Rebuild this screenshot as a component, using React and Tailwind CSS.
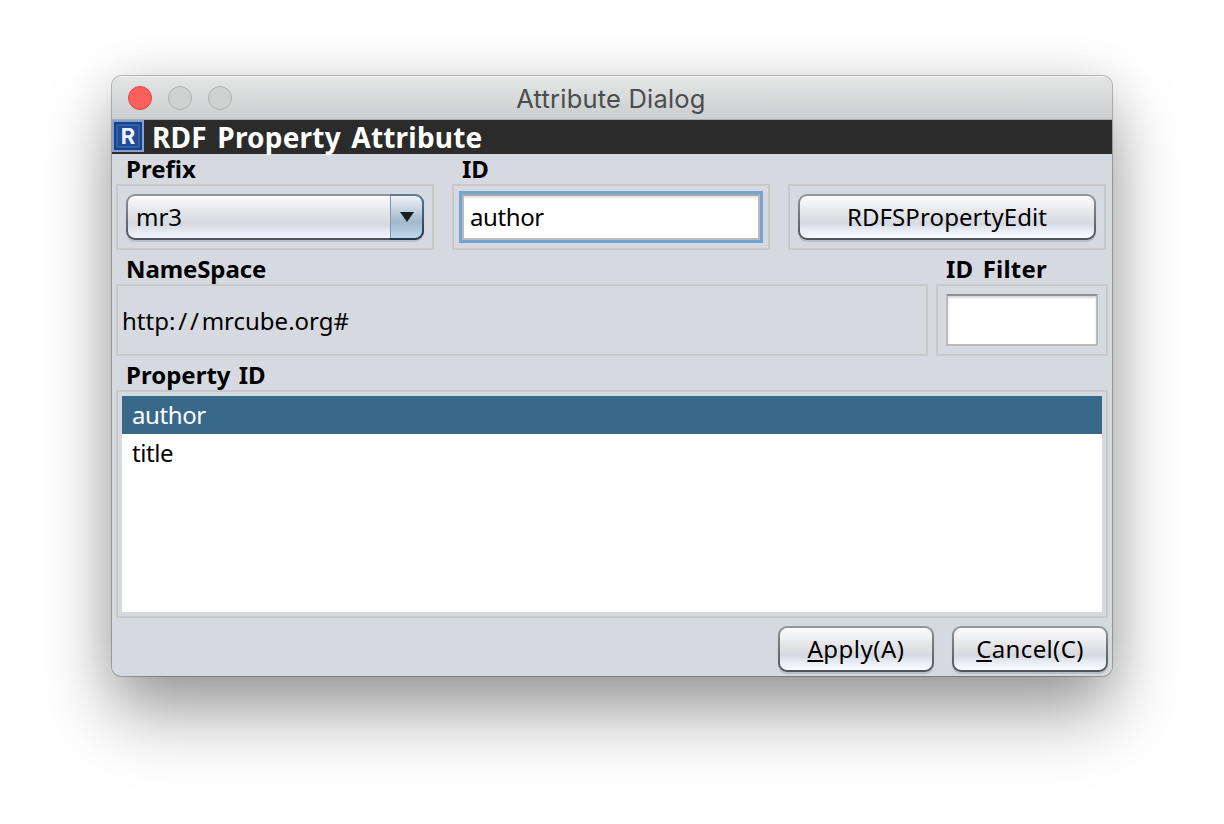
import React from "react";

const raised =
  "flex items-center justify-center rounded-[9px] p-[2px] bg-gradient-to-b from-[#94989d] to-[#50535a] shadow-[0_2px_1px_#b9bdc4]";
const face =
  "flex h-full w-full items-center justify-center rounded-[7px] bg-[linear-gradient(to_bottom,#fcfcfd_0%,#e6e7ea_38%,#d6d9df_66%,#e8ebf4_80%,#fafcff_100%)]";

function Label({ children, className }) {
  return <div className={`pl-[10px] text-[24px] font-bold whitespace-pre ${className}`}>{children}</div>;
}

function Button({ children, className }) {
  return (
    <button className={`${raised} ${className}`}>
      <span className={face}>
        <span>{children}</span>
      </span>
    </button>
  );
}

function PropertyIcon() {
  return (
    <div className="h-[32px] w-[32px] border-2 border-[#8ba0cb] bg-[#113f91] p-[2px]">
      <div className="flex h-full items-center justify-center border-2 border-[#355f9f] bg-[#1f4b98] font-['Inter',sans-serif] text-[22px] leading-[22px] font-bold text-[#f0f3fb]">
        R
      </div>
    </div>
  );
}

export default function App() {
  return (
    <div className="h-[824px] w-[1224px] overflow-hidden bg-white pt-[76px] pl-[112px] font-['Noto_Sans',sans-serif] text-[24px] text-black">
      <div className="h-[600px] w-[1000px] rounded-[10px] shadow-[0_0_0_1px_rgba(0,0,0,0.25),0_38px_70px_rgba(0,0,0,0.36),0_4px_50px_rgba(0,0,0,0.12)]">
        <div className="flex h-full flex-col overflow-hidden rounded-[10px] bg-[#d6d9e0]">
          <header className="relative flex h-[44px] shrink-0 items-center border-t border-b border-t-[#f3f4f4] border-b-[#a9abab] bg-gradient-to-b from-[#e4e6e6] to-[#cbcdce] pl-[16px]">
            <div className="flex gap-[16px]">
              <i className="h-[24px] w-[24px] rounded-full border border-[#e2463f] bg-[#fc605b]" />
              <i className="h-[24px] w-[24px] rounded-full border border-[#adafaf] bg-[#d0d2d2]" />
              <i className="h-[24px] w-[24px] rounded-full border border-[#adafaf] bg-[#d0d2d2]" />
            </div>
            <div className="absolute inset-x-0 top-0 pr-[2px] text-center font-['Inter',sans-serif] text-[25.5px] leading-[44px] tracking-[0.2px] text-[#4b4c4d]">
              Attribute Dialog
            </div>
          </header>
          <div className="flex h-[34px] shrink-0 bg-[#2b2b2b] text-[28px] leading-[35px] font-bold text-white">
            <PropertyIcon />
            <span className="pl-[8px] tracking-[0.2px] [word-spacing:3px]">RDF Property Attribute</span>
          </div>

          <div className="flex gap-[18px] pl-[4px]">
            <div className="w-[318px]">
              <Label className="h-[30px] leading-[30px]">Prefix</Label>
              <div className="h-[66px] border-2 border-[#c8c8c8] p-[8px]">
                <div className="flex h-[46px] rounded-[9px] bg-gradient-to-b from-[#92959e] to-[#50535f] p-[2px] shadow-[0_2px_1px_#bcc0c8]">
                  <div className="flex flex-1 items-center rounded-l-[7px] bg-[linear-gradient(to_bottom,#fcfcfd_0%,#e4e5e9_38%,#d6d9df_68%,#e6e9f3_84%,#f2f5fc_100%)] pl-[8px]">
                    mr3
                  </div>
                  <div className="-my-[2px] -mr-[2px] flex w-[34px] rounded-r-[9px] bg-gradient-to-b from-[#5f7d99] to-[#22364c] py-[2px] pr-[2px]">
                    <div className="flex flex-1 items-center justify-center rounded-r-[7px] border-l border-[#7c97ae] bg-[linear-gradient(to_bottom,#eef3f7_0%,#b5c7d6_45%,#a2b8cc_62%,#c2d7ea_100%)]">
                      <svg width="14" height="12" viewBox="0 0 14 12">
                        <path d="M0 1h14L7 11z" fill="#1b1e21" />
                      </svg>
                    </div>
                  </div>
                </div>
              </div>
            </div>
            <div className="w-[318px]">
              <Label className="h-[30px] leading-[30px]">ID</Label>
              <div className="h-[66px] border-2 border-[#c8c8c8] p-[5px]">
                <div className="h-[52px] w-[304px] border-[3px] border-[#73a4d1]">
                  <div className="flex h-full items-center border-2 border-[#bababa] border-t-[#a5a7aa] bg-white pl-[6px] tracking-[-0.4px] shadow-[inset_0_2px_1px_#e4e4e4]">
                    author
                  </div>
                </div>
              </div>
            </div>
            <div className="w-[318px] pt-[30px]">
              <div className="h-[66px] border-2 border-[#c8c8c8] p-[8px]">
                <Button className="h-[46px] w-full tracking-[0.1px]">RDFSPropertyEdit</Button>
              </div>
            </div>
          </div>

          <div className="flex gap-[8px] pl-[4px]">
            <div className="w-[812px]">
              <Label className="h-[34px] leading-[37px] tracking-[-0.1px]">NameSpace</Label>
              <div className="flex h-[72px] items-center border-2 border-[#c8c8c8] pt-[1px] pl-[4px]">
                <p>
                  http<span className="tracking-[2.8px]">://</span>mrcube.org#
                </p>
              </div>
            </div>
            <div className="w-[172px]">
              <Label className="h-[34px] leading-[37px] tracking-[0.2px] [word-spacing:3px]">ID Filter</Label>
              <div className="h-[72px] border-2 border-[#c8c8c8] p-[8px]">
                <div className="h-[52px] border-2 border-[#bababa] border-t-[#8f9196] bg-white shadow-[inset_0_2px_2px_#d8d8d8]" />
              </div>
            </div>
          </div>

          <div className="px-[4px]">
            <Label className="h-[34px] leading-[37px] [word-spacing:2px]">Property ID</Label>
            <div className="h-[228px] border-2 border-[#c8c8c8] p-[4px]">
              <ul className="h-full bg-white leading-[38px] tracking-[-0.4px]">
                <li className="h-[38px] bg-[#39698a] pl-[10px] text-white">author</li>
                <li className="h-[38px] pl-[10px]">title</li>
              </ul>
            </div>
          </div>

          <div className="flex justify-end gap-[18px] pt-[8px] pr-[4px]">
            <Button className="h-[46px] w-[156px] tracking-[0.5px]">
              <u className="decoration-2 underline-offset-[2px]">A</u>pply(A)
            </Button>
            <Button className="h-[46px] w-[156px] tracking-[0.35px]">
              <u className="decoration-2 underline-offset-[2px]">C</u>ancel(C)
            </Button>
          </div>
        </div>
      </div>
    </div>
  );
}
